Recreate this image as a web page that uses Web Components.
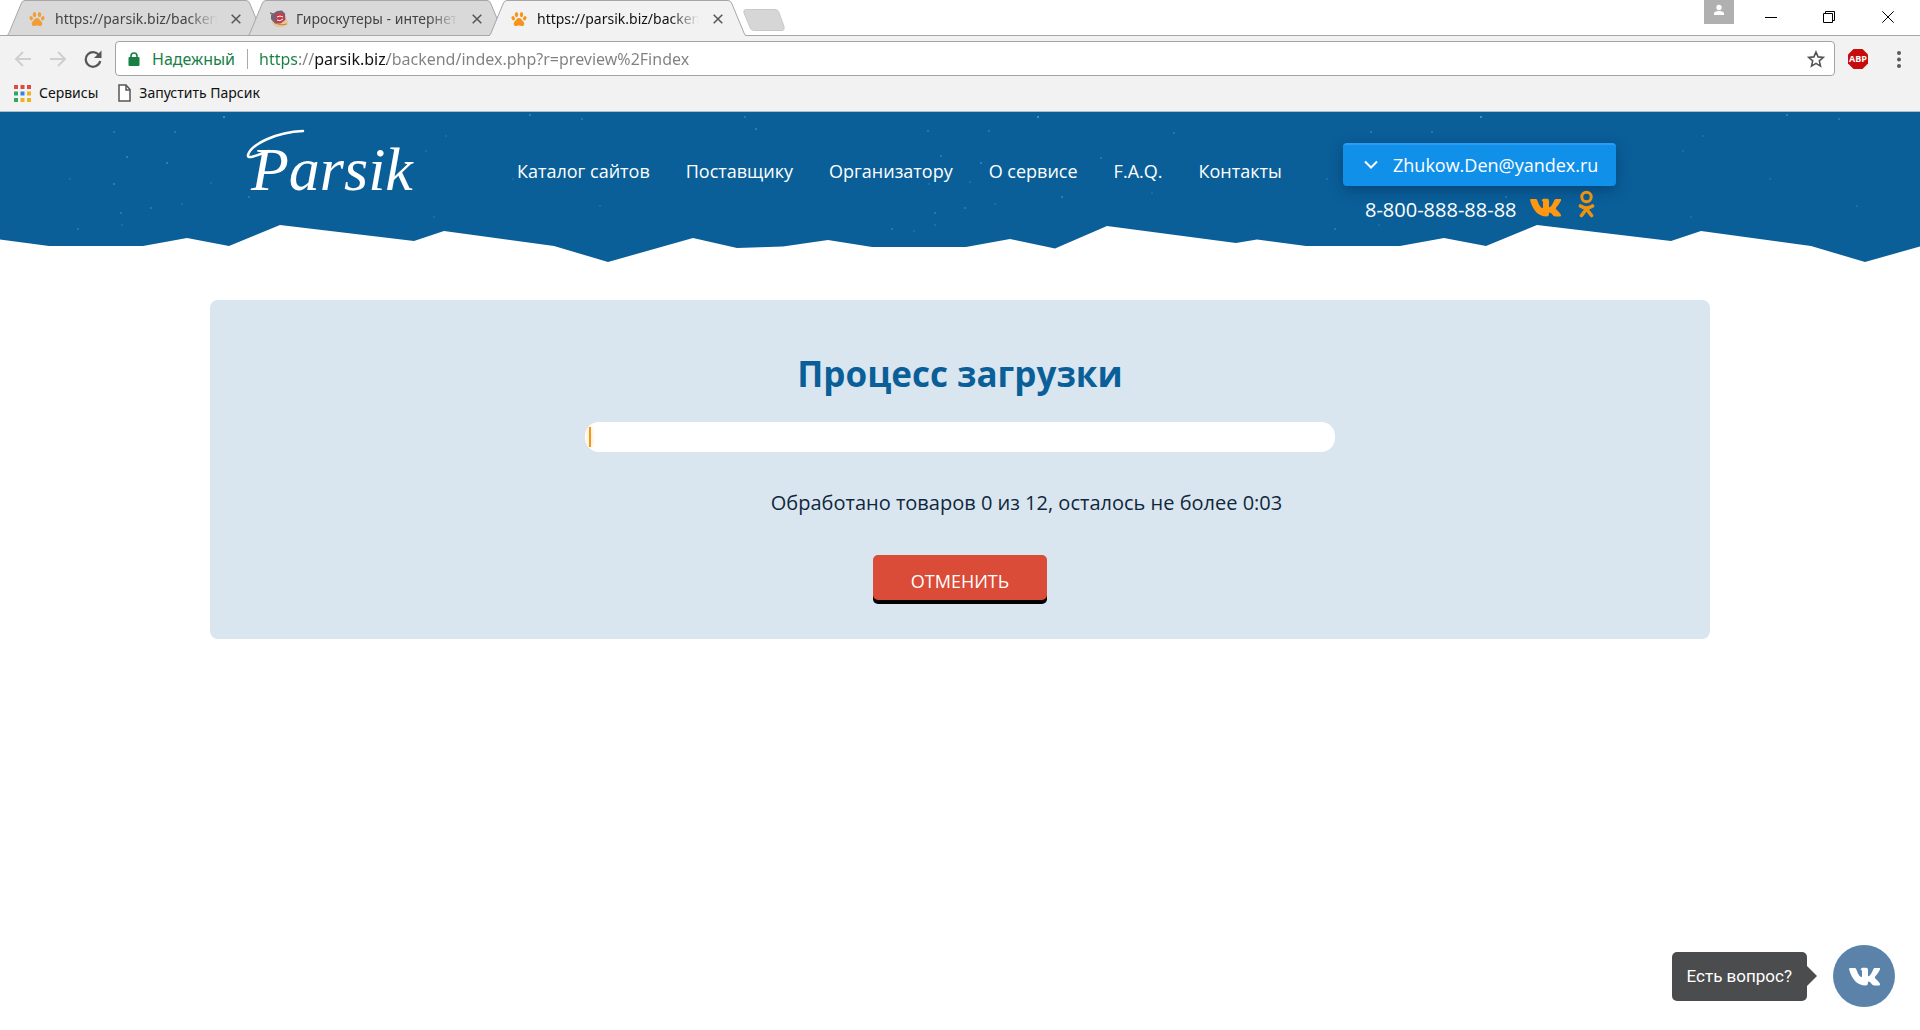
<!DOCTYPE html>
<html lang="ru">
<head>
<meta charset="utf-8">
<title>Parsik — Процесс загрузки</title>
<style>
html, body { margin: 0; min-height: 100%; background: #fff; }
body { font-family: "Open Sans", sans-serif; }
</style>
</head>
<body>
<browser-chrome>
  <browser-tab slot="tabs" icon="paw">https://parsik.biz/backend</browser-tab>
  <browser-tab slot="tabs" icon="shop">Гироскутеры - интернет</browser-tab>
  <browser-tab slot="tabs" icon="paw" active>https://parsik.biz/backend</browser-tab>
  <bookmark-link slot="bookmarks" icon="apps">Сервисы</bookmark-link>
  <bookmark-link slot="bookmarks" icon="page">Запустить Парсик</bookmark-link>
</browser-chrome>
<site-header>
  <nav-link slot="nav">Каталог сайтов</nav-link>
  <nav-link slot="nav">Поставщику</nav-link>
  <nav-link slot="nav">Организатору</nav-link>
  <nav-link slot="nav">О сервисе</nav-link>
  <nav-link slot="nav">F.A.Q.</nav-link>
  <nav-link slot="nav">Контакты</nav-link>
  <account-menu slot="account">Zhukow.Den@yandex.ru</account-menu>
</site-header>
<load-panel>
  <span slot="title">Процесс загрузки</span>
  <span slot="status">Обработано товаров 0 из 12, осталось не более 0:03</span>
  <span slot="action">Отменить</span>
</load-panel>
<chat-widget>Есть вопрос?</chat-widget>

<script>
const define = (name, html) => {
  const template = document.createElement('template');
  template.innerHTML = html;
  customElements.define(name, class extends HTMLElement {
    constructor() {
      super();
      this.attachShadow({ mode: 'open' }).append(template.content.cloneNode(true));
    }
    connectedCallback() {
      const holder = this.shadowRoot.querySelector('[data-icon]');
      if (holder) holder.innerHTML = icons[this.getAttribute('icon')] || '';
    }
  });
};

const vkPath = 'M1 1h5c1 0 1 1 1.600 2 1 3 2.400 6 4.400 7 .7.300 1-.2 1-1.500V5c0-1.500-.4-2-1.500-2.400C12.200 1 13 .7 15 .7c3 0 4 .2 4 2.300v5c0 1.400.6 1.500 1.500.8 1.500-1.500 2.800-4 3.600-6 .5-1.300.8-1.800 2-1.800h4.200c1 0 1.100.5.700 1.500-.8 2-3 4.800-4.600 6.700-.8 1-.8 1.400 0 2.300 1.500 1.400 3.600 3.300 4.400 5.100.5 1.200 0 1.900-1.300 1.900h-4.200c-1.300 0-2-.8-3-2-1-1.200-2-2.100-2.800-2-.5.100-.6.600-.6 1.300 0 2-.4 2.700-2.300 2.700C8 18.500 3 12 .3 3 0 1.700 0 1 1 1z';

const icons = {
  paw: `<svg width="16" height="16" viewBox="0 0 16 16" fill="#f7941d">
    <ellipse cx="5.500" cy="3.600" rx="1.700" ry="2.600"/><ellipse cx="10.500" cy="3.600" rx="1.700" ry="2.600"/>
    <ellipse cx="2.200" cy="7.200" rx="1.600" ry="2.200" transform="rotate(-22 2.200 7.200)"/><ellipse cx="13.800" cy="7.200" rx="1.600" ry="2.200" transform="rotate(22 13.800 7.200)"/>
    <path d="M8 7c2 0 2.600 1.600 3.600 2.800 1.100 1.200 2 2 1.600 3.600-.4 1.700-2.200 1.900-3.300 1.500-1.200-.5-2.600-.5-3.800 0-1.100.400-2.900.200-3.300-1.500C2.400 11.800 3.300 11 4.400 9.800 5.400 8.600 6 7 8 7z"/></svg>`,
  shop: `<svg width="18" height="18" viewBox="0 0 18 18">
    <ellipse cx="10" cy="12" rx="8" ry="5.300" fill="#e9c48d"/><path d="M1 8q5 9 16 6" fill="none" stroke="#c4742f" stroke-width="1"/>
    <path d="M1 5 7 1l5-.5 3 3 .5 6-5 4H5L1 9z" fill="#6e4a60"/><path d="M4 6q4-5 10-1l1 5-4 3H7z" fill="#c42030"/>
    <path d="M0 3l5 2M2 7l5 1" stroke="#4b5878" stroke-width="1.500"/><path d="M7 7l3-1 3 1M7 10q3 2 6-1" stroke="#fff" fill="none"/></svg>`,
  apps: `<svg width="17" height="17" viewBox="0 0 17 17">
    <path d="M0 0h4v4H0zM6.500 0h4v4h-4zM13 0h4v4h-4z" fill="#e04a3f"/>
    <path d="M0 6.500h4v4H0zM0 13h4v4H0z" fill="#35a463"/><path d="M6.500 6.500h4v4h-4z" fill="#3584e4"/>
    <path d="M13 6.500h4v4h-4zM6.500 13h4v4h-4zM13 13h4v4h-4z" fill="#efb11e"/></svg>`,
  page: `<svg width="13" height="18" viewBox="0 0 13 18" fill="#fff" stroke="#555" stroke-width="1.500"><path d="M1 1h7l4 4.500V17H1z"/><path d="M8 1v5h4" fill="none"/></svg>`
};

define('browser-tab', `
<style>
:host { display: grid; grid-template-columns: 100%; width: 257px; height: 36px; margin-left: -16px; color: #444; --fill: #d9d9d9; --line: #a6a6a6; }
:host([active]) { color: #111; --fill: #f2f2f2; z-index: 1; }
.shape, .row { grid-area: 1 / 1; }
.shape { width: 100%; height: 36px; }
.fill { fill: var(--fill); } .edge { fill: none; stroke: var(--line); }
:host(:not([active])) .base { stroke: var(--line); }
.row { display: flex; align-items: center; padding: 3px 21px 0 22px; height: 35px; z-index: 1; box-sizing: border-box; }
.icon { display: flex; width: 26px; }
:host(:not([active])) .icon { opacity: .85; }
.text { flex: 1; min-width: 0; overflow: hidden; white-space: nowrap; font-size: 14px; line-height: 20px;
  -webkit-mask-image: linear-gradient(to right, #000 82%, transparent); mask-image: linear-gradient(to right, #000 82%, transparent); }
button { all: unset; display: flex; margin-left: 12px; padding: 2px; }
</style>
<svg class="shape" viewBox="0 0 257 36" preserveAspectRatio="none"><path class="fill" d="M0 36 L2 34 14 4Q15 .5 18 .5H239Q242 .5 243 4L255 34 257 36z"/><path class="edge" d="M0 35.500Q1 35.500 2 33L14 4Q15 .5 18 .5H239Q242 .5 243 4L255 33Q256 35.500 257 35.500"/><path class="base" d="M0 35.500H257"/></svg>
<div class="row"><span class="icon" data-icon></span><span class="text"><slot></slot></span>
<button aria-label="Закрыть"><svg width="10" height="10" viewBox="0 0 10 10" stroke="#555" stroke-width="1.500"><path d="M.7.7l8.600 8.600M9.300.7.7 9.300"/></svg></button></div>`);

define('bookmark-link', `
<style>
:host { display: block; }
a { display: flex; align-items: center; gap: 8px; color: #111; text-decoration: none; font-size: 14px; line-height: 20px; }
.icon { display: flex; }
</style>
<a href="#"><span class="icon" data-icon></span><slot></slot></a>`);

define('browser-chrome', `
<style>
:host { display: block; background: #f2f2f2; border-bottom: 1px solid #aebdc9; font-family: "Noto Sans", "Open Sans", sans-serif; }
button { all: unset; display: flex; }
.strip { display: flex; height: 36px; background: linear-gradient(#a6a6a6, #a6a6a6) 0 100% / 100% 1px no-repeat #fff; }
.tabs { display: flex; padding-left: 23px; }
.new { align-self: flex-start; margin: 9px 0 0 -4px; }
.controls { display: flex; margin-left: auto; align-items: flex-start; }
.user { background: #b0b0b0; width: 30px; height: 24px; justify-content: center; margin-right: 31px; }
.controls .win { height: 34px; align-items: center; }
.bar { display: flex; align-items: center; padding: 5px 15px 0 14px; }
.nav { display: flex; align-items: center; gap: 17px; margin-right: 13px; }
.box { flex: 1; display: flex; align-items: center; height: 35px; box-sizing: border-box; border: 1px solid #a3a3a3; border-radius: 4px; background: #fff; padding: 0 9px 0 12px; font-size: 16px; }
.secure { color: #188045; margin-left: 12px; padding-right: 12px; border-right: 1px solid #aaa; line-height: 20px; }
input { flex: 1; min-width: 0; border: 0; outline: 0; padding: 0; margin-left: 11px; font: inherit; line-height: 24px; height: 26px; color: transparent;
  background: linear-gradient(to right, #188045 40px, #808080 40px 56px, #111 56px 128px, #808080 128px); -webkit-background-clip: text; background-clip: text; }
.abp { margin: 0 24px 0 12px; }
.abp text { font: bold 9px "Open Sans", sans-serif; }
.marks { display: flex; gap: 20px; padding: 7px 14px 8px; height: 20px; }
</style>
<div class="strip">
  <div class="tabs"><slot name="tabs"></slot></div>
  <button class="new" aria-label="Новая вкладка"><svg width="44" height="22" viewBox="0 0 44 22"><path d="M4 .5h29q3 0 4 3l5 14q1 4-2 4H12q-3 0-4-3L2 4Q1 .5 4 .5z" fill="#d6d6d6" stroke="#c9c9c9"/></svg></button>
  <div class="controls">
    <button class="user" aria-label="Пользователь"><svg width="12" height="24" viewBox="0 0 12 24" fill="#fff"><circle cx="6" cy="7.500" r="2.700"/><path d="M1 15v-1.500q0-2.500 5-2.500t5 2.500V15z"/></svg></button>
    <button class="win" aria-label="Свернуть"><svg width="12" height="12" viewBox="0 0 12 12"><path d="M0 6.500h12" stroke="#000"/></svg></button>
    <button class="win" style="margin-left:46px" aria-label="Развернуть"><svg width="12" height="12" viewBox="0 0 12 12" fill="none" stroke="#000"><path d="M.5 2.500h9v9h-9zM2.500 2.500v-2h9v9h-2"/></svg></button>
    <button class="win" style="margin:0 26px 0 47px" aria-label="Закрыть окно"><svg width="12" height="12" viewBox="0 0 12 12" stroke="#000"><path d="M.3.300l11.400 11.400M11.700.300.3 11.700"/></svg></button>
  </div>
</div>
<div class="bar">
  <div class="nav">
    <button aria-label="Назад"><svg width="18" height="18" viewBox="0 0 18 18" fill="none" stroke="#cfcfcf" stroke-width="2"><path d="M17 9H2M9 2 2 9l7 7"/></svg></button>
    <button aria-label="Вперёд"><svg width="18" height="18" viewBox="0 0 18 18" fill="none" stroke="#cfcfcf" stroke-width="2"><path d="M1 9h15M9 2l7 7-7 7"/></svg></button>
    <button aria-label="Обновить"><svg width="18" height="18" viewBox="0 0 18 18"><path d="M15.500 6A7.300 7.300 0 1 0 16.200 11" fill="none" stroke="#555" stroke-width="2.200"/><path d="M17.500.5V8H10z" fill="#555"/></svg></button>
  </div>
  <div class="box">
    <svg width="12" height="14" viewBox="0 0 12 14"><path d="M3 6V4a3 3 0 0 1 6 0v2" fill="none" stroke="#188045" stroke-width="1.600"/><rect x=".5" y="5" width="11" height="9" rx="1" fill="#188045"/></svg>
    <span class="secure">Надежный</span>
    <input aria-label="Адрес" value="https://parsik.biz/backend/index.php?r=preview%2Findex">
    <button aria-label="В закладки"><svg width="18" height="18" viewBox="0 0 18 18" fill="none" stroke="#555" stroke-width="1.600"><path d="M9 2l2.100 4.900 5.200.5-4 3.500 1.200 5.200L9 13.400l-4.500 2.700 1.200-5.200-4-3.500 5.200-.5z"/></svg></button>
  </div>
  <button class="abp" aria-label="Adblock"><svg width="22" height="22" viewBox="0 0 22 22"><path d="M6.500 1h9L21 6.500v9L15.500 21h-9L1 15.500v-9z" fill="#c70d0c"/><text x="11" y="14" text-anchor="middle" fill="#fff">ABP</text></svg></button>
  <button aria-label="Меню"><svg width="12" height="18" viewBox="0 0 12 18" fill="#5a5a5a"><circle cx="6" cy="3" r="2"/><circle cx="6" cy="9.500" r="2"/><circle cx="6" cy="16" r="2"/></svg></button>
</div>
<div class="marks"><slot name="bookmarks"></slot></div>`);

define('nav-link', `
<style>
:host { display: block; }
a { color: #fff; text-decoration: none; font-size: 18px; line-height: 24px; white-space: nowrap; }
</style>
<a href="#"><slot></slot></a>`);

define('account-menu', `
<style>
:host { display: block; }
button { display: flex; align-items: center; gap: 14px; width: 273px; height: 43px; box-sizing: border-box; border: 0; border-top: 2px solid #2b9df4; border-radius: 4px; background: #1190ea; color: #fff; font: 18px/24px "Open Sans", sans-serif; padding: 0 18px 2px 20px; box-shadow: 0 4px 14px rgba(0,20,60,.35); white-space: nowrap; }
svg { flex: none; }
</style>
<button><svg width="16" height="10" viewBox="0 0 16 10" fill="none" stroke="#fff" stroke-width="2"><path d="M2 1.500l6 6 6-6"/></svg><slot></slot></button>`);

const stars = [[224,117,.6],[114,132,.3],[175,132,.3],[127,157,.4],[167,163,.4],[70,179,.2],[114,184,.4],[211,183,.2],[151,208,.3],[182,204,.2],[121,213,.3],[78,229,.3],[122,225,.2],[530,115,.4],[582,119,.3],[446,136,.2],[426,151,.2],[249,197,.3],[600,206,.2],[434,217,.2],[513,179,.2],[745,117,.3],[756,129,.4],[928,131,.3],[989,131,.3],[941,156,.3],[981,163,.4],[1174,133,.3],[1101,158,.3],[970,182,.2],[929,184,.2],[1062,197,.4],[965,208,.3],[995,204,.2],[935,213,.3],[892,229,.3],[935,225,.2],[1038,117,.6],[1152,193,.2],[914,231,.2]]
  .map(([x, y, o]) => `<circle cx="${x}" cy="${y - 112}" r="1" fill="#8cc4ec" opacity="${o}"/>`).join('');

define('site-header', `
<style>
:host { display: grid; height: 152px; overflow: hidden; color: #fff; }
.sky, .inner { grid-area: 1 / 1; }
.sky { width: 100%; height: 152px; }
.inner { display: flex; width: 100%; max-width: 1500px; margin: 0 auto; padding: 0 94px 0 35px; box-sizing: border-box; align-items: flex-start; z-index: 1; }
.logo { display: block; margin-top: 12px; flex: none; overflow: visible; }
.logo text { font: italic 62px "Liberation Serif", serif; fill: #fff; }
nav { display: flex; gap: 36px; margin: 47px 0 0 98px; }
.side { margin: 31px 0 0 auto; }
.contact { display: flex; align-items: center; margin: 4px 0 0 22px; height: 28px; }
.phone { font-size: 20px; line-height: 24px; margin-top: 12px; white-space: nowrap; }
.vk { margin: 6px 0 0 13px; display: flex; } .ok { margin-left: 17px; display: flex; }
</style>
<svg class="sky" aria-hidden="true"><defs><pattern id="ridge" width="1257" height="152" patternUnits="userSpaceOnUse">
<path fill="#0a5f99" d="M0 0H1257V127.500L1236 131 1107 114 1055 136.500 1010 127 966 135H872L828 128 783 134.500 737 136 693 126 608 150 554 134 444 119 414 129 280 113 229 134 187 126 143 134H49L0 127.500z"/>${stars}</pattern></defs><rect width="100%" height="152" fill="url(#ridge)"/></svg>
<div class="inner">
  <svg class="logo" width="174" height="76" viewBox="0 0 174 76" role="img" aria-label="Parsik"><text x="6" y="66">Parsik</text><path d="M24 27C12 31 2 36 3 31 6 20 32 8 58 7" fill="none" stroke="#fff" stroke-width="2.500" stroke-linecap="round"/></svg>
  <nav><slot name="nav"></slot></nav>
  <div class="side">
    <slot name="account"></slot>
    <div class="contact"><span class="phone">8-800-888-88-88</span>
      <a class="vk" href="#" aria-label="ВКонтакте"><svg width="31" height="19" viewBox="0 0 31 19"><path fill="#ff9710" d="${vkPath}"/></svg></a>
      <a class="ok" href="#" aria-label="Одноклассники"><svg width="17" height="28" viewBox="0 0 17 28" fill="none" stroke="#ee920f" stroke-width="3.600" stroke-linecap="round"><circle cx="8.500" cy="7" r="4.700" stroke-width="3"/><path d="M2.500 16q6 4 12 0M8.500 19l-5 6.500M8.500 19l5 6.500"/></svg></a>
    </div>
  </div>
</div>`);

define('load-panel', `
<style>
:host { display: flex; flex-direction: column; align-items: center; box-sizing: border-box; max-width: 1500px; margin: 36px auto 0; padding: 48px 20px 35px; background: #dae6ef; border-radius: 8px; }
h1 { margin: 0; font-size: 35px; line-height: 52px; font-weight: 700; color: #0a5f99; }
.track { display: flex; align-items: center; width: 50%; min-width: 750px; height: 30px; margin-top: 22px; border-radius: 14px; background: #fff; padding: 0 4px; box-sizing: border-box; }
.fill { width: 2px; height: 20px; background: #f0981d; box-shadow: 0 0 4px #f9cf7c; }
p { margin: 37px 0 0 133px; font-size: 20px; line-height: 28px; color: #10283c; }
button { margin-top: 38px; width: 174px; height: 45px; border: 0; border-radius: 5px; background: #da4b38; box-shadow: 0 4px 0 #000; color: #fff; font: 18px/24px "Open Sans", sans-serif; text-transform: uppercase; padding: 6px 0 0; margin-bottom: 4px; }
</style>
<h1><slot name="title"></slot></h1>
<div class="track" role="progressbar" aria-label="Загрузка" aria-valuemin="0" aria-valuemax="12" aria-valuenow="0"><div class="fill"></div></div>
<p><slot name="status"></slot></p>
<button><slot name="action"></slot></button>`);

define('chat-widget', `
<style>
:host { position: fixed; right: 25px; bottom: 23px; display: flex; align-items: center; font-family: Roboto, sans-serif; }
.tip { background: #4a4c4d; color: #fff; border-radius: 5px; padding: 13px 15px 14px; font-size: 17px; line-height: 22px; }
.arrow { border: 10px solid transparent; border-left-color: #4a4c4d; border-right: 0; margin-right: 16px; }
button { display: flex; align-items: center; justify-content: center; width: 62px; height: 62px; border: 0; border-radius: 50%; background: #5b83aa; padding: 0; }
</style>
<span class="tip"><slot></slot></span><span class="arrow"></span>
<button aria-label="Написать ВКонтакте"><svg width="31" height="19" viewBox="0 0 31 19"><path fill="#fff" d="${vkPath}"/></svg></button>`);
</script>
</body>
</html>
